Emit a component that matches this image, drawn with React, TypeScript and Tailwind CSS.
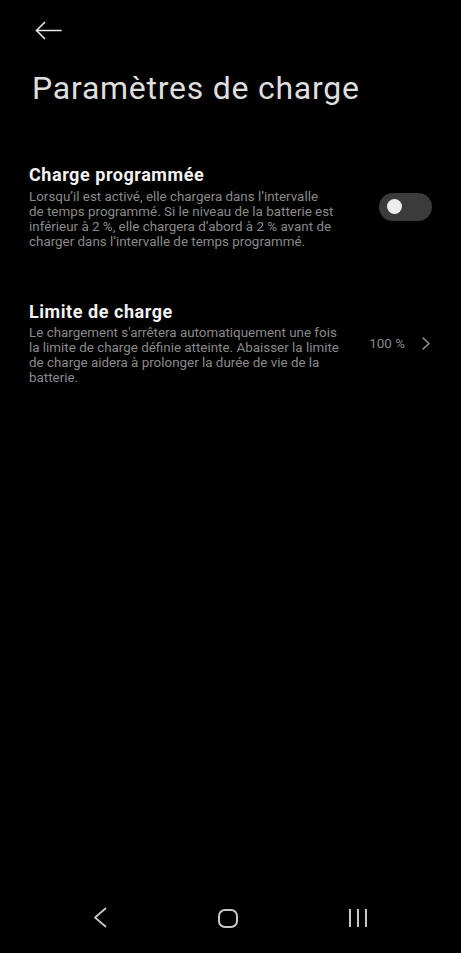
import React from "react";

const Line = ({ children }: { children: React.ReactNode }) => (
  <span className="block whitespace-nowrap">{children}</span>
);

export default function App() {
  return (
    <div className="w-[461px] h-[953px] bg-black flex flex-col" style={{ fontFamily: "Roboto, 'Noto Sans', sans-serif" }}>
      <div className="h-[69px] pl-[35px] pt-[21px]">
        <svg width="27" height="19" viewBox="0 0 27 19" fill="none" stroke="#e6e6e6" strokeWidth="1.7" strokeLinecap="round" strokeLinejoin="round">
          <path d="M1.5 9.5H26" />
          <path d="M9.5 1.5L1.5 9.5L9.5 17.5" />
        </svg>
      </div>
      <h1 className="pl-[32px] text-[32px] leading-[38px] tracking-[0.75px] text-[#dedede] font-normal">Paramètres de charge</h1>
      <div className="mt-[57px] px-[29px] flex items-center justify-between">
        <div className="w-[314px]">
          <div className="text-[18px] leading-[22px] tracking-[0.55px] font-bold text-[#f2f2f2]">Charge programmée</div>
          <div className="mt-[3px] text-[13.4px] leading-[15px] text-[#8a8a8a]">
            <Line>Lorsqu’il est activé, elle chargera dans l’intervalle</Line>
            <Line>de temps programmé. Si le niveau de la batterie est</Line>
            <Line>inférieur à 2 %, elle chargera d’abord à 2 % avant de</Line>
            <Line>charger dans l’intervalle de temps programmé.</Line>
          </div>
        </div>
        <div className="w-[53px] h-[28px] rounded-full bg-[#3b3b3b] flex items-center pl-[8px]">
          <div className="w-[15px] h-[15px] rounded-full bg-[#ececec]" />
        </div>
      </div>
      <div className="mt-[52px] pl-[29px] pr-[31px] flex items-center justify-between">
        <div className="w-[314px]">
          <div className="text-[18px] leading-[22px] tracking-[0.55px] font-bold text-[#f2f2f2]">Limite de charge</div>
          <div className="mt-[2px] text-[13.4px] leading-[15px] text-[#8a8a8a]">
            <Line>Le chargement s'arrêtera automatiquement une fois</Line>
            <Line>la limite de charge définie atteinte. Abaisser la limite</Line>
            <Line>de charge aidera à prolonger la durée de vie de la</Line>
            <Line>batterie.</Line>
          </div>
        </div>
        <div className="flex items-center">
          <span className="text-[13.4px] leading-[15px] text-[#8a8a8a]">100 %</span>
          <svg className="ml-[17px]" width="8" height="13" viewBox="0 0 8 13" fill="none" stroke="#9a9a9a" strokeWidth="1.4" strokeLinecap="round" strokeLinejoin="round">
            <path d="M1 1L7 6.5L1 12" />
          </svg>
        </div>
      </div>
      <div className="flex-1" />
      <div className="h-[60px] flex items-start justify-between pt-[14px] pl-[93px] pr-[94px]">
        <svg width="14" height="21" viewBox="0 0 14 21" fill="none" stroke="#c8c8c8" strokeWidth="1.8" strokeLinecap="round" strokeLinejoin="round">
          <path d="M12.5 1.5L2 10.5L12.5 19.5" />
        </svg>
        <div className="mt-[2px] w-[20px] h-[19px] rounded-[7px] border-[2px] border-[#c8c8c8]" />
        <svg width="18" height="20" viewBox="0 0 18 20" fill="none" stroke="#c8c8c8" strokeWidth="2">
          <path d="M1 2V20M9 2V20M17 2V20" />
        </svg>
      </div>
    </div>
  );
}
